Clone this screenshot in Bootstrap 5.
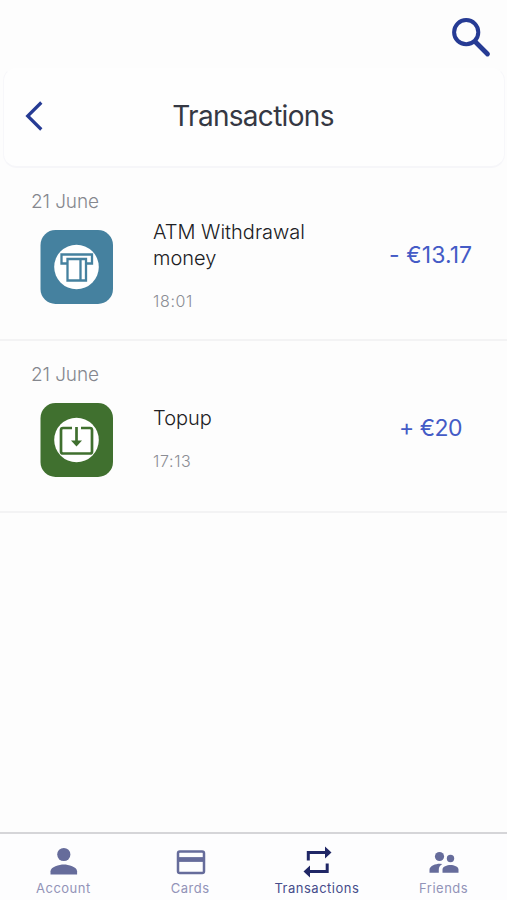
<!DOCTYPE html>
<html lang="en">
<head>
<meta charset="utf-8">
<meta name="viewport" content="width=device-width, initial-scale=1">
<title>Transactions</title>
<link href="https://cdn.jsdelivr.net/npm/bootstrap@5.3.0/dist/css/bootstrap.min.css" rel="stylesheet">
<style>
body{font-family:Inter,"Liberation Sans",sans-serif;background:#fdfdfd;height:900px;overflow:hidden}
.topbar{height:67px;padding:14px 14px 0 0}
.title-panel{height:101px;margin:0 2px 0 3px;border:1px solid #f7f7fa;border-top-color:#fdfdfd;border-bottom:2px solid #f6f6f9;border-radius:14px;background:#fefefe;padding:0 21px 3px}
.title-panel h1{font-size:28px;font-weight:400;letter-spacing:-.7px;color:#353843;position:relative;top:1px;left:-1px}
.side{width:22px}
.entry{height:173px;border-bottom:2px solid #f3f3f4;padding:21px 0 0 31px}
.entry+.entry{height:172px}
.date{font-size:19px;line-height:26px;font-weight:300;color:#85878e;letter-spacing:-.1px}
.tile{width:73px;height:74px;margin:15px 0 0 8.500px;flex:none}
.desc{margin:4px 0 0 40.500px;width:236px}
.desc-single{margin-top:17px}
.name{font-size:20px;line-height:26px;color:#202023;font-weight:300}
.time{font-size:16px;line-height:22px;margin-top:19px;color:#8b8d94;font-weight:300;letter-spacing:.65px}
.amount{font-size:23px;line-height:30px;margin-top:25px;color:#445bc6;font-weight:400;white-space:pre;letter-spacing:.1px}
.amount-in{margin-left:10px;letter-spacing:-.5px}
.tabs{height:68px;border-top:2px solid #d5d5d8;background:#fdfdfe;padding-top:9px}
.tab{color:#9293b8;font-size:13px;line-height:18px;text-decoration:none;letter-spacing:.5px}
.tab svg{color:#666c9b}
.tab.on{color:#464c8b}
.tab.on svg{color:#202766}
svg{display:block}
</style>
<script src="https://cdn.jsdelivr.net/npm/bootstrap@5.3.0/dist/js/bootstrap.bundle.min.js"></script>
</head>
<body class="d-flex flex-column">
<div class="topbar d-flex justify-content-end">
<svg width="44" height="46" viewBox="449 14 44 46" fill="none" stroke="#263b94"><circle cx="466.200" cy="32.200" r="12.100" stroke-width="4"/><path d="M475.500 42L487.500 54" stroke-width="4.800" stroke-linecap="round"/></svg>
</div>
<header class="title-panel d-flex align-items-center justify-content-between">
<svg class="side" height="34" viewBox="25 98 22 34" fill="none" stroke="#263b94" stroke-width="3.200"><path d="M41.300 101.500L27.700 115 41.300 128.500"/></svg>
<h1 class="m-0">Transactions</h1>
<span class="side"></span>
</header>
<main class="flex-grow-1">
<section class="entry">
<div class="date">21 June</div>
<div class="d-flex">
<svg class="tile" viewBox="0 0 73 74"><rect x=".500" width="72.500" height="74" rx="15" fill="#45819f"/><circle cx="36.500" cy="37" r="22.300" fill="#fff"/><g fill="none" stroke="#45819f" stroke-width="2.300"><path d="M27.500 33.500h-6v-9h30.500v9h-6"/><path d="M27.500 29h18.500v21.500H27.500zM40.500 29v21.500"/></g></svg>
<div class="desc"><div class="name">ATM Withdrawal<br>money</div><div class="time">18:01</div></div>
<div class="amount">- €13.17</div>
</div>
</section>
<section class="entry">
<div class="date">21 June</div>
<div class="d-flex">
<svg class="tile" viewBox="0 0 73 74"><rect x=".500" width="72.500" height="74" rx="15" fill="#40702f"/><circle cx="36.500" cy="37" r="22.300" fill="#fff"/><g fill="none" stroke="#40702f" stroke-width="2.700"><path d="M32 25H23q-2 0-2 2v21.500q0 2 2 2h27q2 0 2-2V27q0-2-2-2h-9"/><path d="M36.500 24v15"/></g><path d="M31 37.500h11l-5.500 6z" fill="#40702f"/></svg>
<div class="desc desc-single"><div class="name">Topup</div><div class="time">17:13</div></div>
<div class="amount amount-in">+ €20</div>
</div>
</section>
</main>
<nav class="tabs row g-0 flex-shrink-0">
<a class="tab col d-flex flex-column align-items-center" href="#"><svg width="44" height="36" viewBox="41.500 843 44 36" fill="currentColor"><circle cx="64.300" cy="854.500" r="6.600"/><path d="M51 874.500v-3.300c0-4.400 8.800-6.700 13.300-6.700s13.300 2.300 13.300 6.700v3.300z"/></svg><span>Account</span></a>
<a class="tab col d-flex flex-column align-items-center" href="#"><svg width="44" height="36" viewBox="168 843 44 36" fill="none" stroke="currentColor"><rect x="178" y="851.500" width="26" height="21.500" rx="1.800" stroke-width="2.500"/><path d="M178 859.500h26" stroke-width="4.800"/></svg><span>Cards</span></a>
<a class="tab on col d-flex flex-column align-items-center" href="#"><svg width="44" height="36" viewBox="295 843 44 36"><g fill="none" stroke="currentColor" stroke-width="3"><path d="M308.300 860.500v-8H326M327.200 863.500v8H309"/></g><path d="M325 846.500v12l6.500-6zM310 865.500v12l-6.500-6z" fill="currentColor"/></svg><span>Transactions</span></a>
<a class="tab col d-flex flex-column align-items-center" href="#"><svg width="44" height="36" viewBox="422.500 843 44 36" fill="currentColor"><circle cx="440" cy="856.500" r="4.600"/><circle cx="451" cy="858.500" r="3.700"/><path d="M430 872.800v-3c0-4 6.500-6 10-6l2.800.3c-2.500 1.600-3.500 3.300-3.500 5.700v3zM443 872.800v-3.300c0-3 4.500-4.500 8-4.500s8 1.500 8 4.500v3.300z"/></svg><span>Friends</span></a>
</nav>
</body>
</html>
